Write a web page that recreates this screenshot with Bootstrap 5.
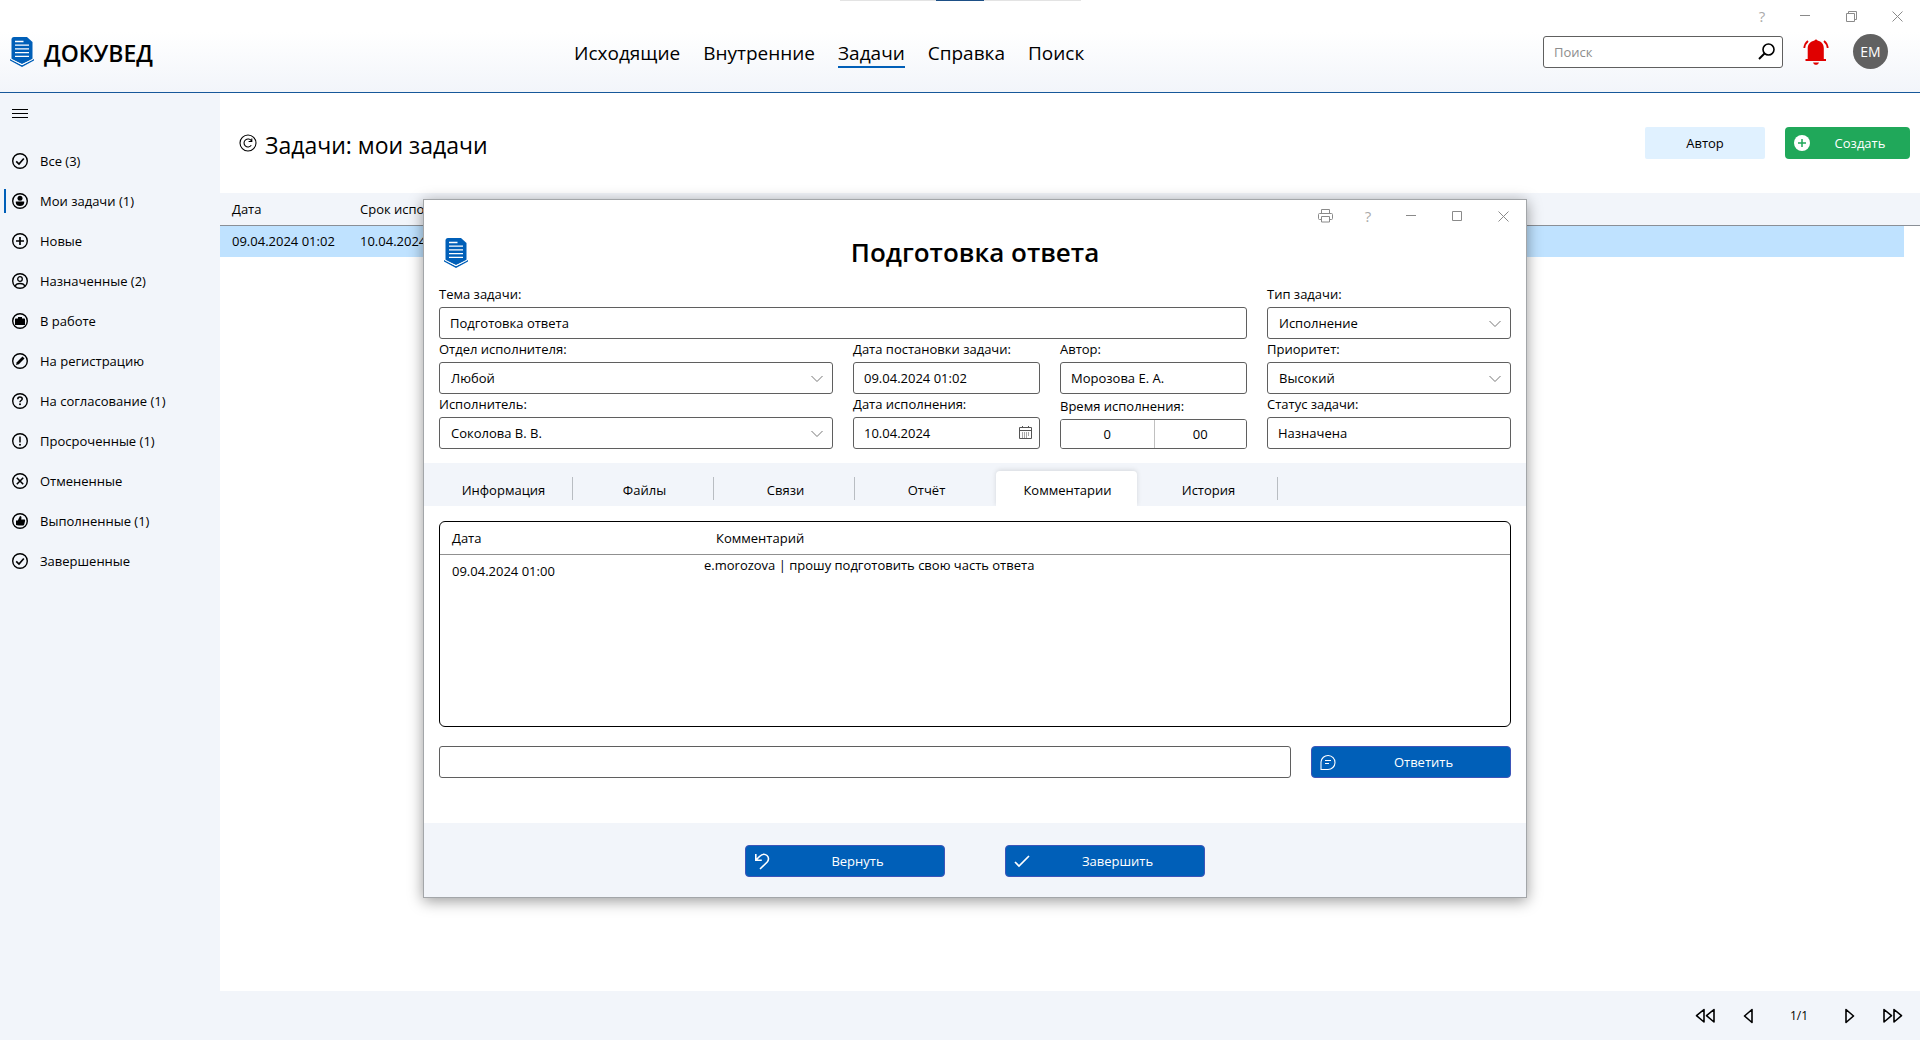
<!DOCTYPE html>
<html lang="ru">
<head>
<meta charset="utf-8">
<meta name="viewport" content="width=device-width, initial-scale=1">
<title>Докувед — Задачи</title>
<link href="https://cdn.jsdelivr.net/npm/bootstrap@5.3.0/dist/css/bootstrap.min.css" rel="stylesheet">
<style>
:root{--pane:#f2f5fa;--brand:#005fb8;--line:#5f5f5f}
body{font-family:"Open Sans","Noto Sans",sans-serif;font-size:13px;line-height:20px;color:#000;background:#fff}
button,input,select{font-family:inherit;color:inherit}
svg{display:block;flex:none}
.ico-btn{border:0;background:none;padding:0;color:#000;display:flex;align-items:center;justify-content:center}

/* header */
.top-bar{height:93px;background:linear-gradient(#fff 32px,var(--pane));border-bottom:1px solid #17589a;padding-left:10px}
.grip{top:0;left:840px;width:241px;height:1px;background:#e3e3e3}
.grip::after{content:"";position:absolute;left:96px;width:48px;height:1px;background:#1d4f86}
.brand-box{width:564px;gap:10px;font-size:23px;line-height:30px;font-weight:600;color:#000;padding-top:12px}
.brand-box span{padding-top:2px}
.main-nav{gap:23px;padding-top:16px}
.main-nav a{font-size:19px;line-height:26px;color:#000;text-decoration:none;border-bottom:2px solid transparent}
.main-nav a.active{border-color:var(--brand)}
.win-btns{height:32px;color:#8a8a8a}
.win-btns .ico-btn{width:46px;height:32px;color:inherit;font-size:15px}
.win-btns .help{width:40px;color:#aaa}
.user-row{padding-top:2px}
.search-box{width:240px}
.field{height:32px;border:1px solid var(--line);border-radius:3px;background-color:#fff;font-size:13px;line-height:20px;padding:5px 10px;color:#000;width:100%}
.field::placeholder{color:#8d8d8d;opacity:1}
.search-box .ico-btn{right:8px;top:7px}
.avatar{width:35px;height:35px;border-radius:50%;background:#616161;color:#fff;font-size:14px;padding:0;border:0}

/* sidebar */
.side{flex:0 0 220px;background:var(--pane);padding-top:9px;white-space:nowrap}
.side .burger{margin-left:12px;height:23px}
.side-list{padding-top:16px}
.side-list a{height:40px;padding-left:12px;gap:12px;color:#000;text-decoration:none;display:flex;align-items:center;position:relative}
.side-list a.active::before{content:"";position:absolute;left:4px;top:8px;width:2px;height:24px;background:var(--brand)}

/* work area */
.work-head{height:100px;padding:0 10px 0 19px}
.work-head h1{font-size:23px;line-height:32px;font-weight:400;margin:0;padding-top:4px}
.act{height:32px;border:0;border-radius:4px;font-size:13px;position:relative;padding:0}
.act-author{width:120px;background:#e0f1ff;border-radius:2px}
.act-create{width:125px;background:#20a85a;color:#fff;padding-left:25px;margin-left:20px}
.act > svg{position:absolute;left:8px;top:7px}
.task-grid{table-layout:fixed;width:100%;margin:0}
.task-grid th{background:var(--pane);font-weight:400;height:32px;padding:0 0 0 12px;border-bottom:1px solid #8a8f96}
.task-grid td{height:32px;padding:0 0 0 12px;background:#bfe2ff}
.task-grid td.gutter,.task-grid th.gutter{padding-left:0}
.task-grid td.gutter{background:#fff}
.pager{height:49px;background:var(--pane);padding-right:17px}
.pager span{font-size:12px;margin:0 37px}

/* task window */
.task-win{left:423px;right:393px;top:199px;background:#fff;border:1px solid #a3a6a9;box-shadow:0 3px 14px rgba(0,0,0,.4)}
.win-title{height:42px;padding-left:20px}
.win-title h2{font-size:26px;line-height:32px;font-weight:600;margin:0;top:4px;left:0;right:0}
.form-grid{display:grid;grid-template-columns:394fr 187fr 187fr 244fr;column-gap:20px;padding:10px 15px 14px}
.form-grid label{display:block;height:23px;line-height:20px}
.span-3{grid-column:span 3}
.pick{appearance:none;background:#fff url("data:image/svg+xml,%3Csvg xmlns='http://www.w3.org/2000/svg' width='12' height='8' fill='none' stroke='%23777' stroke-width='1'%3E%3Cpath d='M.5 1 6 6.500 11.500 1'/%3E%3C/svg%3E") no-repeat right 9px top 12px;padding-left:11px}
.time-pair{height:30px;border:1px solid var(--line);border-radius:3px;overflow:hidden}
.time-pair input{border:0;width:50%;text-align:center;padding:0}
.time-pair input + input{border-left:1px solid #c0c0c0}
.form-grid .time-cap{height:25px;line-height:24px}
.cal{right:8px;top:9px}
.tab-strip{height:43px;background:var(--pane);padding:8px 0 0 8px}
.tab-strip .tab-btn{width:141px;height:35px;border:0;background:none;position:relative;padding:2px 0 0 2px}
.tab-btn::after{content:"";position:absolute;right:0;top:6px;height:23px;width:1px;background:#b9bdc2}
.tab-strip .tab-btn.active{background:#fff;border-radius:4px 4px 0 0;box-shadow:0 -1px 5px rgba(0,0,0,.12);clip-path:inset(-6px -6px 0 -6px)}
.tab-btn.active::after,.tab-btn.before-active::after{display:none}
.notes{height:206px;border:1px solid #000;border-radius:6px;margin:15px 15px 19px}
.notes table{width:100%;table-layout:fixed}
.notes th{font-weight:400;height:32px;padding:0 0 0 12px;border-bottom:1px solid #909090}
.notes td{padding:6px 0 0 12px;vertical-align:top}
.notes td.msg{padding:0}
.reply-row{gap:20px;padding:0 15px 45px}
.act-blue{width:200px;background:var(--brand);color:#fff;border:1px solid #3d55b8;padding-left:25px}
.win-foot{height:74px;gap:60px;background:var(--pane);padding-top:2px}
</style>
</head>
<body class="d-flex flex-column min-vh-100 position-relative">

<svg width="0" height="0" class="position-absolute" aria-hidden="true">
  <symbol id="logo" viewBox="0 0 24 30">
    <path fill="#005fb8" d="M4 0h13l5.500 5v17.500L12 27 1.500 22.500V2.500Q1.500 0 4 0z"/>
    <path fill="#005fb8" d="M0 22l12 6.300L24 22v1.600L12 30 0 23.600z"/>
    <path stroke="#fff" stroke-width="1" fill="none" d="M1 22l11 5.700L23 22"/>
    <path stroke="#fff" stroke-width="1.300" fill="none" d="M5 4.500h8.500M5 8.200h14M5 11.900h14M5 15.600h14M5 19.300h14"/>
  </symbol>
  <symbol id="ring" viewBox="0 0 16 16"><circle cx="8" cy="8" r="7.300" fill="none" stroke="#000" stroke-width="1.400"/></symbol>
</svg>

<header class="top-bar d-flex">
  <div class="grip position-absolute"></div>
  <div class="brand-box d-flex align-items-center">
    <svg width="24" height="30"><use href="#logo"/></svg><span>ДОКУВЕД</span>
  </div>
  <nav class="main-nav d-flex align-items-center">
    <a href="#">Исходящие</a><a href="#">Внутренние</a><a href="#" class="active" aria-current="page">Задачи</a><a href="#">Справка</a><a href="#">Поиск</a>
  </nav>
  <div class="ms-auto d-flex flex-column align-items-end">
    <div class="win-btns d-flex">
      <button class="ico-btn help" aria-label="Помощь">?</button>
      <button class="ico-btn" aria-label="Свернуть"><svg width="10" height="10"><path stroke="currentColor" d="M0 4.500h10"/></svg></button>
      <button class="ico-btn" aria-label="Восстановить"><svg width="11" height="11" fill="none" stroke="currentColor"><path d="M.5 2.500h8v8h-8zM2.500 2.500v-2h8v8h-2"/></svg></button>
      <button class="ico-btn" aria-label="Закрыть"><svg width="11" height="11" stroke="currentColor"><path d="M.5.5l10 10M10.500.5l-10 10"/></svg></button>
    </div>
    <div class="user-row d-flex align-items-center pe-4 me-2">
      <div class="search-box position-relative">
        <input class="field" type="text" placeholder="Поиск" aria-label="Поиск">
        <button class="ico-btn position-absolute" aria-label="Найти"><svg width="17" height="17" fill="none" stroke="#000"><circle cx="10.500" cy="6.500" r="5.500" stroke-width="1.600"/><path stroke-width="1.900" d="M6.500 10.500L1 16"/></svg></button>
      </div>
      <button class="ico-btn ms-3 ps-1" aria-label="Уведомления"><svg width="26" height="27" viewBox="0 0 26 27"><path fill="#e00000" d="M11.500 2.500a1.700 1.700 0 0 1 3 0c4 .8 6.300 3.800 6.300 8V21h2.200v2H2.500v-2h2.200V10.500c0-4.200 2.800-7.200 6.800-8zM10 24.500h6c-.6 1.500-1.600 2.300-3 2.300s-2.400-.8-3-2.300z"/><path fill="none" stroke="#e00000" stroke-width="1.800" d="M5 3C2.800 4.800 1.600 7 1.300 10M21 3c2.200 1.800 3.400 4 3.700 7"/></svg></button>
      <button class="avatar ms-4">EM</button>
    </div>
  </div>
</header>

<div class="d-flex flex-grow-1">
  <aside class="side">
    <button class="ico-btn burger" aria-label="Меню"><svg width="16" height="10"><path stroke="#000" d="M0 .5h16M0 4.500h16M0 8.500h16"/></svg></button>
    <nav class="side-list">
      <a href="#"><svg width="16" height="16"><use href="#ring"/><path fill="none" stroke="#000" stroke-width="1.700" d="M4.200 8.300L7 11l4.800-5.500"/></svg>Все (3)</a>
      <a href="#" class="active" aria-current="true"><svg width="16" height="16"><use href="#ring"/><circle cx="8" cy="5.300" r="2.500"/><path d="M3.800 8.500h8.400v1.200c0 2-1.800 3.300-4.200 3.300s-4.200-1.300-4.200-3.300z"/></svg>Мои задачи (1)</a>
      <a href="#"><svg width="16" height="16"><use href="#ring"/><path stroke="#000" stroke-width="1.700" d="M8 4v8M4 8h8"/></svg>Новые</a>
      <a href="#"><svg width="16" height="16" fill="none" stroke="#000" stroke-width="1.300"><use href="#ring"/><circle cx="8" cy="6" r="2.300"/><path d="M3.300 13c.5-1.800 2-2.500 4.700-2.500s4.200.7 4.700 2.500"/></svg>Назначенные (2)</a>
      <a href="#"><svg width="16" height="16"><use href="#ring"/><path d="M4 5.500h2V4h4v1.500h2c.6 0 1 .4 1 1V12H3V6.500c0-.6.400-1 1-1z"/></svg>В работе</a>
      <a href="#"><svg width="16" height="16"><use href="#ring"/><path d="M4 12l.8-2.800 5.700-5.700 2 2-5.700 5.700z"/></svg>На регистрацию</a>
      <a href="#"><svg width="16" height="16"><use href="#ring"/><path fill="none" stroke="#000" stroke-width="1.500" d="M5.800 6.200c0-1.400.9-2.100 2.200-2.100s2.200.7 2.200 1.900c0 1.500-2.200 1.500-2.200 3.200"/><circle cx="8" cy="11.300" r="1"/></svg>На согласование (1)</a>
      <a href="#"><svg width="16" height="16"><use href="#ring"/><path stroke="#000" stroke-width="1.500" d="M8 3.500v6"/><circle cx="8" cy="11.800" r="1"/></svg>Просроченные (1)</a>
      <a href="#"><svg width="16" height="16"><use href="#ring"/><path stroke="#000" stroke-width="1.600" d="M4.800 4.800l6.400 6.400M11.200 4.800l-6.400 6.400"/></svg>Отмененные</a>
      <a href="#"><svg width="16" height="16"><use href="#ring"/><path d="M4 7.500h1.800L8 3c1.500 0 1.800 1 1.200 3.500h3c.8 0 1 .6.900 1.300l-.8 3.400c-.2.900-.8 1.300-1.600 1.300H6.500L4 12z"/></svg>Выполненные (1)</a>
      <a href="#"><svg width="16" height="16"><use href="#ring"/><path fill="none" stroke="#000" stroke-width="1.700" d="M4.200 8.300L7 11l4.800-5.500"/></svg>Завершенные</a>
    </nav>
  </aside>

  <main class="flex-grow-1">
    <div class="work-head d-flex align-items-center">
      <button class="ico-btn me-2" aria-label="Обновить"><svg width="18" height="18" fill="none" stroke="#000" stroke-width="1.100"><circle cx="9" cy="9" r="8"/><path d="M12.300 11.300A4 4 0 1 1 12.500 7M12.800 4.500v3H9.600"/></svg></button>
      <h1>Задачи: мои задачи</h1>
      <button class="act act-author ms-auto">Автор</button>
      <button class="act act-create"><svg width="18" height="18"><circle cx="9" cy="9" r="8" fill="#fff"/><path stroke="#20a85a" stroke-width="1.500" d="M9 5v8M5 9h8"/></svg>Создать</button>
    </div>
    <table class="task-grid">
      <colgroup><col style="width:128px"><col><col style="width:16px"></colgroup>
      <thead><tr><th>Дата</th><th>Срок исполнения</th><th class="gutter"></th></tr></thead>
      <tbody><tr><td>09.04.2024 01:02</td><td>10.04.2024</td><td class="gutter"></td></tr></tbody>
    </table>
  </main>
</div>

<footer class="pager d-flex align-items-center justify-content-end">
  <button class="ico-btn me-4" aria-label="Первая"><svg width="20" height="16" fill="none" stroke="#000" stroke-width="1.600" stroke-linejoin="round"><path d="M9 1.500v12.500L1.500 7.700zM19 1.500v12.500L11.500 7.700z"/></svg></button>
  <button class="ico-btn ms-1" aria-label="Назад"><svg width="10" height="16" fill="none" stroke="#000" stroke-width="1.600" stroke-linejoin="round"><path d="M9 1.500v13L1.500 8z"/></svg></button>
  <span>1/1</span>
  <button class="ico-btn" aria-label="Вперёд"><svg width="10" height="16" fill="none" stroke="#000" stroke-width="1.600" stroke-linejoin="round"><path d="M1 1.500v13L8.500 8z"/></svg></button>
  <button class="ico-btn ms-4 ps-1" aria-label="Последняя"><svg width="20" height="16" fill="none" stroke="#000" stroke-width="1.600" stroke-linejoin="round"><path d="M1 1.500v12.500L8.500 7.700zM11 1.500v12.500L18.500 7.700z"/></svg></button>
</footer>

<section class="task-win position-absolute" role="dialog" aria-labelledby="win-h">
  <div class="win-btns d-flex justify-content-end">
    <button class="ico-btn" aria-label="Печать"><svg width="15" height="14" fill="none" stroke="currentColor"><path d="M3.500 4V.5h8V4M3.500 10.500h-2a1 1 0 0 1-1-1V5.500a1 1 0 0 1 1-1h12a1 1 0 0 1 1 1v4a1 1 0 0 1-1 1h-2M3.500 7.500h8v5.500h-8z"/></svg></button>
    <button class="ico-btn help" aria-label="Помощь">?</button>
    <button class="ico-btn" aria-label="Свернуть"><svg width="10" height="10"><path stroke="currentColor" d="M0 4.500h10"/></svg></button>
    <button class="ico-btn" aria-label="Развернуть"><svg width="10" height="10" fill="none" stroke="currentColor"><path d="M.5.5h9v9h-9z"/></svg></button>
    <button class="ico-btn" aria-label="Закрыть"><svg width="11" height="11" stroke="currentColor"><path d="M.5.5l10 10M10.500.5l-10 10"/></svg></button>
  </div>
  <div class="win-title d-flex align-items-center position-relative">
    <svg width="24" height="30"><use href="#logo"/></svg>
    <h2 id="win-h" class="position-absolute text-center">Подготовка ответа</h2>
  </div>
  <div class="form-grid">
    <div class="span-3"><label for="f1">Тема задачи:</label><input id="f1" class="field" value="Подготовка ответа"></div>
    <div><label for="f2">Тип задачи:</label><select id="f2" class="field pick"><option>Исполнение</option></select></div>
    <div><label for="f3">Отдел исполнителя:</label><select id="f3" class="field pick"><option>Любой</option></select></div>
    <div><label for="f4">Дата постановки задачи:</label><input id="f4" class="field" value="09.04.2024 01:02"></div>
    <div><label for="f5">Автор:</label><input id="f5" class="field" value="Морозова Е. А."></div>
    <div><label for="f6">Приоритет:</label><select id="f6" class="field pick"><option>Высокий</option></select></div>
    <div><label for="f7">Исполнитель:</label><select id="f7" class="field pick"><option>Соколова В. В.</option></select></div>
    <div><label for="f8">Дата исполнения:</label>
      <div class="position-relative"><input id="f8" class="field" value="10.04.2024"><button class="ico-btn position-absolute cal" aria-label="Календарь"><svg width="13" height="13" fill="none" stroke="#555"><path d="M.5 1.500h12v11H.5zM.5 4.500h12M3.500 0v2M9.500 0v2"/><path stroke-dasharray="1 1" d="M3 7h7M3 9h7M3 11h5"/></svg></button></div></div>
    <div><label for="f9" class="time-cap">Время исполнения:</label><div class="time-pair d-flex"><input id="f9" value="0"><input value="00" aria-label="Минуты"></div></div>
    <div><label for="f10">Статус задачи:</label><input id="f10" class="field" value="Назначена"></div>
  </div>
  <div class="tab-strip d-flex" role="tablist">
    <button class="tab-btn" role="tab">Информация</button>
    <button class="tab-btn" role="tab">Файлы</button>
    <button class="tab-btn" role="tab">Связи</button>
    <button class="tab-btn before-active" role="tab">Отчёт</button>
    <button class="tab-btn active" role="tab" aria-selected="true">Комментарии</button>
    <button class="tab-btn" role="tab">История</button>
  </div>
  <div class="notes">
    <table>
      <colgroup><col style="width:264px"><col></colgroup>
      <thead><tr><th>Дата</th><th>Комментарий</th></tr></thead>
      <tbody><tr><td>09.04.2024 01:00</td><td class="msg">e.morozova | прошу подготовить свою часть ответа</td></tr></tbody>
    </table>
  </div>
  <div class="reply-row d-flex">
    <input class="field flex-grow-1" type="text" aria-label="Новый комментарий">
    <button class="act act-blue flex-shrink-0"><svg width="16" height="17" fill="none" stroke="#fff" stroke-width="1.100"><path d="M1 15.500V8a7 7 0 1 1 7 7.500zM5 6.500h6M5 9.500h4"/></svg>Ответить</button>
  </div>
  <div class="win-foot d-flex align-items-center justify-content-center">
    <button class="act act-blue"><svg width="16" height="17" fill="none" stroke="#fff" stroke-width="1.600"><path d="M1.800 1v6.200h6M2 7l3.500-3.500C8 1 11 .8 13 2.500s2 4.500 0 6.700L6 16"/></svg>Вернуть</button>
    <button class="act act-blue"><svg width="16" height="17" fill="none" stroke="#fff" stroke-width="1.700"><path d="M1 9l4 4L15 3"/></svg>Завершить</button>
  </div>
</section>

<script src="https://cdn.jsdelivr.net/npm/bootstrap@5.3.0/dist/js/bootstrap.bundle.min.js"></script>
</body>
</html>
